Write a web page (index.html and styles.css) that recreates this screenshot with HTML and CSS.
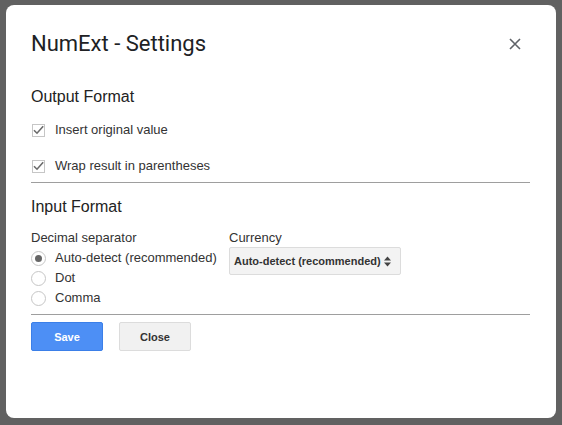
FILE: index.html
```html
<!DOCTYPE html>
<html>
<head>
<meta charset="utf-8">
<link rel="stylesheet" href="styles.css">
</head>
<body>
<div class="dialog">
  <div class="header">
    <h1 class="title">NumExt - Settings</h1>
    <button class="close-x" aria-label="Close">
      <svg width="12" height="12" viewBox="0 0 12 12"><path d="M1 1L11 11M11 1L1 11" stroke="#5f6368" stroke-width="1.6" fill="none"/></svg>
    </button>
  </div>

  <h2 class="section">Output Format</h2>
  <label class="check-row">
    <span class="checkbox"><svg width="11" height="10" viewBox="0 0 11 10"><path d="M1 5.2L4 8.2L10.2 1.2" stroke="#6b6b6b" stroke-width="1.6" fill="none"/></svg></span>
    <span>Insert original value</span>
  </label>
  <label class="check-row second">
    <span class="checkbox"><svg width="11" height="10" viewBox="0 0 11 10"><path d="M1 5.2L4 8.2L10.2 1.2" stroke="#6b6b6b" stroke-width="1.6" fill="none"/></svg></span>
    <span>Wrap result in parentheses</span>
  </label>

  <div class="rule rule-1"></div>

  <h2 class="section section-input">Input Format</h2>
  <div class="columns">
    <div class="col col-decimal">
      <div class="field-label">Decimal separator</div>
      <div class="radio-row"><span class="radio checked"></span><span>Auto-detect (recommended)</span></div>
      <div class="radio-row"><span class="radio"></span><span>Dot</span></div>
      <div class="radio-row"><span class="radio"></span><span>Comma</span></div>
    </div>
    <div class="col">
      <div class="field-label">Currency</div>
      <div class="select">
        <span>Auto-detect (recommended)</span>
        <svg class="arrows" width="7" height="11" viewBox="0 0 7 11"><path d="M3.5 0.5L7 4.5H0Z M3.5 10.5L7 6.5H0Z" fill="#444"/></svg>
      </div>
    </div>
  </div>

  <div class="rule rule-2"></div>

  <div class="buttons">
    <button class="btn btn-action">Save</button>
    <button class="btn">Close</button>
  </div>
</div>
</body>
</html>
```

FILE: styles.css
```css
html, body {
  margin: 0;
  padding: 0;
  height: 100%;
}
body {
  background: #616161;
  padding: 5px 6px 7px 6px;
  box-sizing: border-box;
  font-family: "Liberation Sans", Arial, sans-serif;
  font-size: 13px;
  color: #333;
}
.dialog {
  background: #fff;
  border-radius: 8px;
  width: 550px;
  height: 413px;
  box-sizing: border-box;
  padding: 25px 26px 0 25px;
}
.header {
  display: flex;
  justify-content: space-between;
  align-items: flex-start;
}
.title {
  margin: 0;
  font-family: Roboto, "Noto Sans", sans-serif;
  font-weight: 400;
  font-size: 22px;
  line-height: 28px;
  color: #202124;
}
.close-x {
  border: 0;
  background: none;
  padding: 0;
  margin: 8px 9px 0 0;
  width: 12px;
  height: 12px;
  display: flex;
}
.section {
  margin: 29px 0 0 0;
  font-size: 16px;
  line-height: 20px;
  font-weight: 400;
  color: #222;
}
.check-row {
  display: flex;
  align-items: center;
  height: 16px;
  line-height: 16px;
  margin-top: 15px;
  gap: 10px;
}
.check-row.second {
  margin-top: 20px;
}
.checkbox {
  width: 11px;
  height: 11px;
  border: 1px solid #c6c6c6;
  margin-left: 1px;
  display: flex;
  align-items: center;
  justify-content: center;
  box-sizing: content-box;
}
.checkbox svg {
  margin-top: -1px;
}
.rule {
  height: 1px;
  background: #9e9e9e;
}
.rule-1 {
  margin-top: 8px;
}
.section-input {
  margin-top: 14px;
}
.columns {
  display: flex;
  margin-top: 13px;
}
.col-decimal {
  width: 198px;
}
.field-label {
  line-height: 16px;
}
.radio-row {
  display: flex;
  align-items: center;
  height: 20px;
  line-height: 20px;
  gap: 9px;
}
.field-label + .radio-row {
  margin-top: 2px;
}
.radio {
  width: 13px;
  height: 13px;
  border: 1px solid #c6c6c6;
  border-radius: 50%;
  display: flex;
  align-items: center;
  justify-content: center;
}
.radio.checked::after {
  content: "";
  width: 7px;
  height: 7px;
  border-radius: 50%;
  background: #666;
}
.select {
  margin-top: 1px;
  width: 172px;
  height: 28px;
  box-sizing: border-box;
  border: 1px solid #dcdcdc;
  border-radius: 2px;
  background: #f3f3f3;
  display: flex;
  align-items: center;
  justify-content: space-between;
  padding: 0 9px 0 4px;
  font-size: 11px;
  font-weight: bold;
  color: #333;
}
.rule-2 {
  margin-top: 6px;
}
.buttons {
  display: flex;
  gap: 16px;
  margin-top: 7px;
}
.btn {
  height: 29px;
  min-width: 72px;
  box-sizing: border-box;
  border: 1px solid #dcdcdc;
  border-radius: 2px;
  background: #f1f1f1;
  color: #333;
  font-family: "Liberation Sans", Arial, sans-serif;
  font-size: 11px;
  font-weight: bold;
  padding: 0 8px;
}
.btn-action {
  background: #4d8ff5;
  border-color: #3b7fe8;
  color: #fff;
}
```
